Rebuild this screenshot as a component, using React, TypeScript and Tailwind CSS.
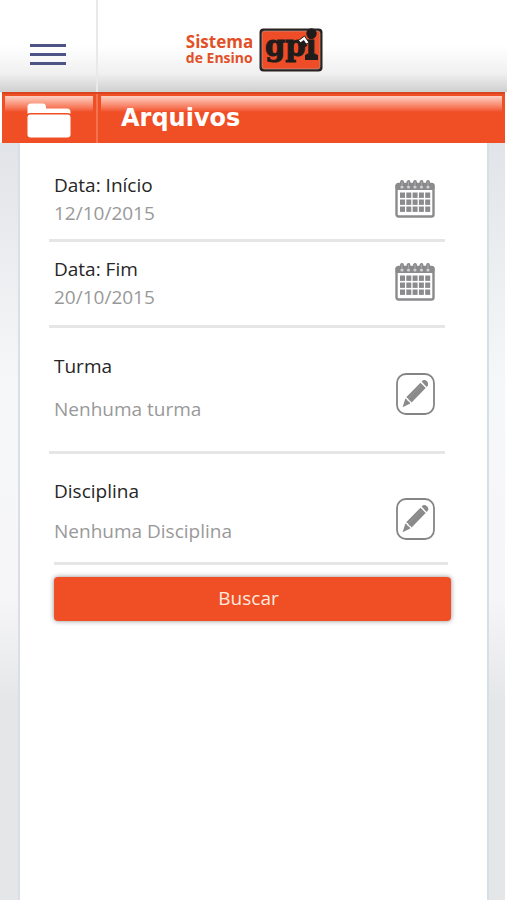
import type { ReactNode } from "react";

function CalendarIcon() {
  const rings = [7, 13.5, 20, 26.5, 33];
  const columns = [5, 11.3, 17.6, 23.9, 30.2];
  const rows = [13.5, 20.5, 27.5];
  return (
    <svg width="40" height="39" viewBox="0 0 40 39" aria-hidden="true">
      <rect x="1.5" y="5" width="37" height="32.5" rx="2" fill="#fff" stroke="#8b8b8e" strokeWidth="2.4" />
      <rect x="0.5" y="4.5" width="39" height="6.5" rx="2" fill="#8b8b8e" />
      {rings.map((x) => (
        <g key={x}>
          <circle cx={x} cy="8" r="1.6" fill="#d0d0d2" />
          <path d={`M${x - 1.3} 6V3a1.3 1.3 0 0 1 2.600 0V7`} fill="#a5a5a8" stroke="#858588" strokeWidth="1.2" />
        </g>
      ))}
      {rows.map((y) =>
        columns.map((x) => <rect key={`${x}-${y}`} x={x} y={y} width="5" height="5.4" fill="#8b8b8e" />),
      )}
    </svg>
  );
}

function PencilIcon() {
  return (
    <svg width="39" height="42" viewBox="0 0 39 42" aria-hidden="true">
      <rect x="1" y="1" width="37" height="40" rx="9" fill="#fff" stroke="#858585" strokeWidth="1.8" />
      <g fill="#8a8a8a">
        <path d="M25.6 8.6 27 7.3Q28.8 6.100 31 8.300Q33.200 10.600 31.900 12.500L30.600 13.900Z" />
        <path d="M24.500 9.700 29.700 15 15.600 29.600Q14.400 27.600 13.200 27.200Q12.400 25.300 10.200 24.300Z" />
        <path d="M9.400 25.400Q11.200 26 11.800 28.100Q13.600 28.600 14.300 30.400L6.600 34.200Z" />
      </g>
      <path d="M25 12.500 12.300 25.700" stroke="#9e9e9e" strokeWidth="0.600" />
    </svg>
  );
}

function FolderIcon() {
  return (
    <svg width="44" height="36" viewBox="0 0 44 36" aria-hidden="true">
      <path d="M0.500 11V4Q0.500 0.500 4 0.500H15.500Q19 0.500 19 4V5.500H40Q43.500 5.500 43.500 9V11Q43 10 40 10H4Q1 10 0.500 11Z" fill="#fff" />
      <rect x="0.500" y="11.500" width="43" height="23" rx="3" fill="#fff" />
    </svg>
  );
}

function Logo() {
  return (
    <a href="#inicio" aria-label="Sistema de Ensino gpi" className="flex items-center gap-1.5 pt-[7px]">
      <span className="flex flex-col font-['Open_Sans','Noto_Sans',sans-serif] font-bold text-[#e25027]">
        <span className="text-[17px] leading-[17px]">Sistema</span>
        <span className="whitespace-nowrap text-[14px] leading-4">de Ensino</span>
      </span>
      <svg width="64" height="44" viewBox="0 0 64 44" aria-hidden="true">
        <rect x="0.500" y="0.500" width="63" height="43" rx="4" fill="#2a2220" />
        <rect x="3" y="3" width="58" height="38" rx="2.500" fill="#ee4d27" stroke="#b9aaa5" strokeWidth="0.600" />
        <text x="6" y="28" fontFamily="'DejaVu Serif', serif" fontWeight="700" fontSize="29" fill="#201c1c" stroke="#201c1c" strokeWidth="1">
          gpi
        </text>
        <rect x="46" y="27" width="13" height="5" fill="#201c1c" />
        <circle cx="52.500" cy="5.500" r="5.200" fill="#201c1c" />
        <path d="M39.500 12.500 45.500 8 50 14.500 44 18Z" fill="#fff" stroke="#201c1c" strokeWidth="1" />
        <path d="M40.500 15 44.800 12 48.500 17.500 45 20Z" fill="#201c1c" />
      </svg>
    </a>
  );
}

type FieldProps = {
  id: string;
  label: string;
  value: string;
  action: string;
  icon: ReactNode;
  rowClass: string;
  textClass?: string;
  iconClass: string;
};

function Field({ id, label, value, action, icon, rowClass, textClass = "", iconClass }: FieldProps) {
  return (
    <div className={`flex items-start justify-between border-b-[3px] border-[#e6e6e7] ${rowClass}`}>
      <div className={`flex min-w-0 flex-1 flex-col ${textClass}`}>
        <label htmlFor={id} className="text-[19px] leading-7 text-[#262626]">
          {label}
        </label>
        <input
          id={id}
          type="text"
          defaultValue={value}
          className="h-7 w-full min-w-0 bg-transparent p-0 text-[19px] leading-7 text-[#999] outline-none"
        />
      </div>
      <button type="button" aria-label={action} className={`shrink-0 cursor-pointer ${iconClass}`}>
        {icon}
      </button>
    </div>
  );
}

function SideStrip() {
  return <div className="bg-[linear-gradient(to_bottom,#e1e4e8_0%,#f6f7f8_32%,#f6f6f8_60%,#e5e6e8_74%)]" />;
}

export default function App() {
  return (
    <div className="flex min-h-screen flex-col bg-white font-['Open_Sans','Noto_Sans',sans-serif]">
      <header className="grid h-[92px] grid-cols-[98px_1fr_96px] bg-linear-to-b from-white from-50% via-[#f0f0f0] via-80% to-[#cfcfcf]">
        <div className="flex justify-center border-r-2 border-[#e9e9e9] pt-4">
          <button type="button" aria-label="Menu" className="flex cursor-pointer flex-col items-center justify-center gap-[6px]">
            <span className="h-[3px] w-9 bg-[#4b5484]" />
            <span className="h-[3px] w-9 bg-[#4b5484]" />
            <span className="h-[3px] w-9 bg-[#4b5484]" />
          </button>
        </div>
        <div className="flex items-center justify-center">
          <Logo />
        </div>
      </header>

      <div className="mx-0.5 grid h-[51px] grid-cols-[96px_1fr] border-t-2 border-[#d9451f] bg-[#f04e25]">
        <div className="border-r-2 border-[#f37350] px-[3px] pt-0.5">
          <div className="flex h-4 justify-center bg-linear-to-b from-[#fbcfc3] to-[#f04e25] pt-[7px]">
            <div className="shrink-0">
              <FolderIcon />
            </div>
          </div>
        </div>
        <div className="px-[3px] pt-0.5">
          <div className="h-4 bg-linear-to-b from-[#fbcfc3] to-[#f04e25] pt-2 pl-5">
            <h1 className="font-['DejaVu_Sans',Verdana,sans-serif] text-2xl leading-7 font-bold text-white">Arquivos</h1>
          </div>
        </div>
      </div>

      <main className="mr-0.5 grid flex-1 grid-cols-[18px_1fr_16px]">
        <SideStrip />
        <form
          className="flex flex-col border-x-2 border-r-[#d5e0e2] border-l-[#dbdee6] bg-white pr-9 pb-6 pl-[29px]"
          onSubmit={(event) => event.preventDefault()}
        >
          <Field
            id="inicio"
            label="Data: Início"
            value="12/10/2015"
            action="Escolher data de início"
            icon={<CalendarIcon />}
            rowClass="mr-1.5 pr-2.5 pl-[5px] pt-7 pb-3"
            iconClass="mt-2"
          />
          <Field
            id="fim"
            label="Data: Fim"
            value="20/10/2015"
            action="Escolher data de fim"
            icon={<CalendarIcon />}
            rowClass="mr-1.5 pr-2.5 pl-[5px] pt-[13px] pb-[14px]"
            iconClass="mt-[7px]"
          />
          <Field
            id="turma"
            label="Turma"
            value="Nenhuma turma"
            action="Editar turma"
            icon={<PencilIcon />}
            rowClass="mr-1.5 pr-2.5 pl-[5px] pt-6 pb-7"
            textClass="gap-[15px]"
            iconClass="mt-[21px]"
          />
          <Field
            id="disciplina"
            label="Disciplina"
            value="Nenhuma Disciplina"
            action="Editar disciplina"
            icon={<PencilIcon />}
            rowClass="ml-[5px] mr-[3px] pr-[13px] pt-[23px] pb-[17px]"
            textClass="gap-3"
            iconClass="mt-[21px]"
          />
          <button
            type="submit"
            className="mt-3 ml-[5px] flex h-11 cursor-pointer items-start justify-center rounded-sm bg-[#f04e25] pt-[7px] pr-2 text-[19px] leading-7 text-[#ffe9df] shadow-[0_0_5px_rgba(0,0,0,0.45)]"
          >
            Buscar
          </button>
        </form>
        <SideStrip />
      </main>
    </div>
  );
}
